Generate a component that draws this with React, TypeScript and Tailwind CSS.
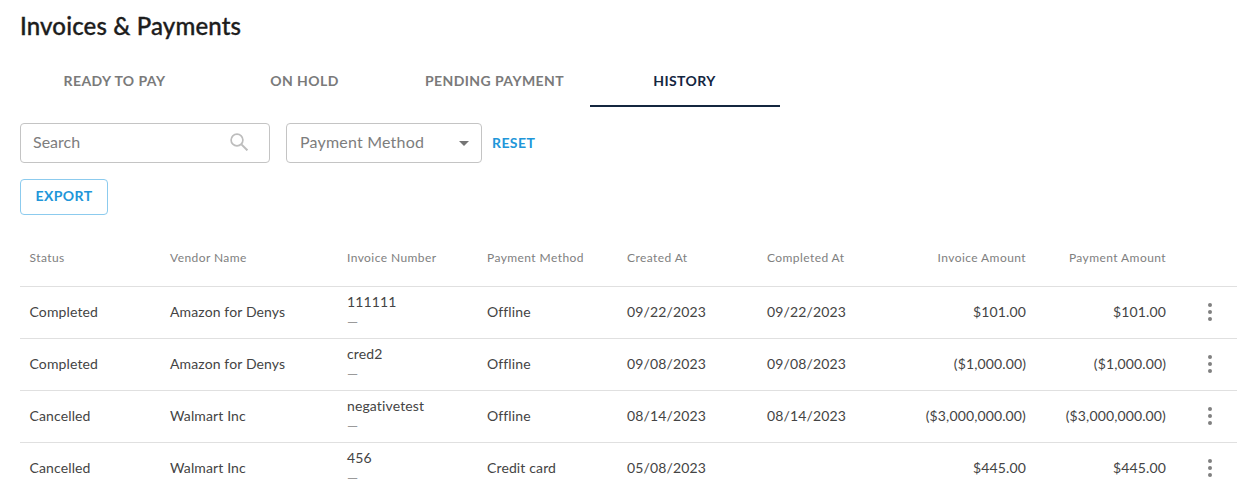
import React from "react";

const tabs = ["READY TO PAY", "ON HOLD", "PENDING PAYMENT", "HISTORY"];

const rows = [
  { status: "Completed", vendor: "Amazon for Denys", invoice: "111111", method: "Offline", created: "09/22/2023", completed: "09/22/2023", invoiceAmount: "$101.00", paymentAmount: "$101.00" },
  { status: "Completed", vendor: "Amazon for Denys", invoice: "cred2", method: "Offline", created: "09/08/2023", completed: "09/08/2023", invoiceAmount: "($1,000.00)", paymentAmount: "($1,000.00)" },
  { status: "Cancelled", vendor: "Walmart Inc", invoice: "negativetest", method: "Offline", created: "08/14/2023", completed: "08/14/2023", invoiceAmount: "($3,000,000.00)", paymentAmount: "($3,000,000.00)" },
  { status: "Cancelled", vendor: "Walmart Inc", invoice: "456", method: "Credit card", created: "05/08/2023", completed: "", invoiceAmount: "$445.00", paymentAmount: "$445.00" },
];

const Dots = () => (
  <svg width="4" height="18" viewBox="0 0 4 18" fill="#808080" className="block">
    <circle cx="2" cy="2" r="2" />
    <circle cx="2" cy="9" r="2" />
    <circle cx="2" cy="16" r="2" />
  </svg>
);

const SearchIcon = () => (
  <svg width="18" height="18" viewBox="0 0 18 18" fill="none" stroke="#bdbdbd" strokeWidth="1.7" className="block">
    <circle cx="7" cy="7" r="5.9" />
    <path d="M11.4 11.4 17.4 17.4" strokeWidth="2" />
  </svg>
);

export default function App() {
  return (
    <div className="h-[491px] overflow-hidden bg-white pl-5 font-['Lato',sans-serif] text-[#444444]">
      <h1 className="pt-[11px] text-[24px] leading-[30px] font-medium tracking-[0.15px] text-[#1d1d1d] [-webkit-text-stroke:0.35px_#1d1d1d]">Invoices &amp; Payments</h1>

      <div className="mt-[15px] flex">
        {tabs.map((tab) => (
          <div
            key={tab}
            className={
              tab === "HISTORY"
                ? "flex h-[51px] w-[190px] items-center justify-center border-b-2 border-[#14263f] pr-px text-sm font-bold tracking-[0.4px] text-[#14263f]"
                : "flex h-[51px] w-[190px] items-center justify-center border-b-2 border-transparent pr-px text-sm font-bold tracking-[0.42px] text-[#7a7a7a]"
            }
          >
            {tab}
          </div>
        ))}
      </div>

      <div className="mt-4 flex items-center">
        <div className="flex h-10 w-[250px] items-center justify-between rounded border border-[#c4c4c4] pr-[21px] pb-0.5 pl-3 text-base text-[#7d7d7d]">
          <span>Search</span>
          <SearchIcon />
        </div>
        <div className="ml-4 flex h-10 w-[196px] items-center justify-between rounded border border-[#c4c4c4] pr-3 pb-0.5 pl-[13px] text-base tracking-[0.2px] text-[#7d7d7d]">
          <span>Payment Method</span>
          <svg width="10" height="5" viewBox="0 0 10 5" fill="#757575" className="mt-0.5">
            <path d="M0 0h10L5 5z" />
          </svg>
        </div>
        <span className="ml-2.5 text-sm font-bold tracking-[0.4px] text-[#2196d9]">RESET</span>
      </div>

      <button className="mt-4 flex h-9 w-[88px] items-center justify-center rounded border border-[#8ccbee] pb-0.5 text-sm font-bold tracking-[0.4px] text-[#2196d9]">
        EXPORT
      </button>

      <table className="mt-[15px] w-[1217px] table-fixed border-collapse text-sm tracking-[0.13px]">
        <colgroup>
          <col className="w-[150px]" />
          <col className="w-[177px]" />
          <col className="w-[140px]" />
          <col className="w-[140px]" />
          <col className="w-[140px]" />
          <col className="w-[129px]" />
          <col className="w-[140px]" />
          <col className="w-[140px]" />
          <col />
        </colgroup>
        <thead>
          <tr className="h-[56px] border-b border-[#e0e0e0] text-left text-xs tracking-[0.42px] text-[#808080]">
            <th className="pl-[9.5px] font-normal">Status</th>
            <th className="font-normal">Vendor Name</th>
            <th className="font-normal">Invoice Number</th>
            <th className="font-normal">Payment Method</th>
            <th className="font-normal">Created At</th>
            <th className="font-normal">Completed At</th>
            <th className="pr-2.5 text-right font-normal">Invoice Amount</th>
            <th className="pr-2.5 text-right font-normal">Payment Amount</th>
            <th />
          </tr>
        </thead>
        <tbody>
          {rows.map((row) => (
            <tr key={row.invoice} className="h-[52px] border-b border-[#e0e0e0]">
              <td className="pl-[9.5px]">{row.status}</td>
              <td>{row.vendor}</td>
              <td>
                <div className="leading-[20px]">{row.invoice}</div>
                <div className="leading-[20px] text-[#9a9a9a]">—</div>
              </td>
              <td>{row.method}</td>
              <td>{row.created}</td>
              <td>{row.completed}</td>
              <td className="pr-2.5 text-right">{row.invoiceAmount}</td>
              <td className="pr-2.5 text-right">{row.paymentAmount}</td>
              <td className="pl-8"><Dots /></td>
            </tr>
          ))}
        </tbody>
      </table>
    </div>
  );
}
